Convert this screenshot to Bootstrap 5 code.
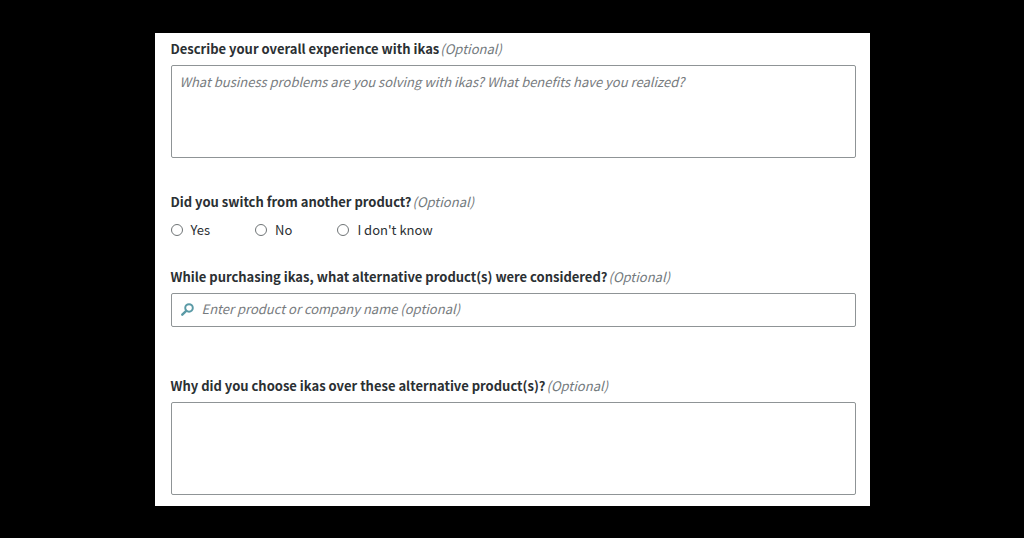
<!DOCTYPE html>
<html lang="en">
<head>
<meta charset="utf-8">
<meta name="viewport" content="width=device-width, initial-scale=1">
<title>ikas review form</title>
<link href="https://cdn.jsdelivr.net/npm/bootstrap@5.3.0/dist/css/bootstrap.min.css" rel="stylesheet">
<style>
  body { background: #000; color: #2b3033; font: 13px/20px "Noto Sans CJK SC", "Open Sans", sans-serif; }
  .review-form { max-width: 715px; padding: 6px 14px 11px 16px; }
  .question { display: flex; flex-wrap: wrap; column-gap: 1px; font-weight: 700; line-height: 20px; margin-bottom: 6px; padding: 0; font-size: 13px; }
  .question i { font-weight: 400; color: #72797d; }
  .form-control { border: 1px solid #8f9496; border-radius: 2px; font-size: 13px; line-height: 20px; padding: 6px 8px; color: #2b3033; }
  .form-control::placeholder { color: #777b7e; font-style: italic; }
  textarea.form-control { height: 93px; resize: none; }
  .search-box .form-control { height: 34px; padding: 5px 8px 7px 30px; }
  .search-box svg { left: 10px; top: 10px; }
  .choices { column-gap: 45px; }
  .choices label { gap: 8px; }
  .choices .form-check-input { width: 12px; height: 12px; margin: 0; border: 1px solid #6f7476; }
  .block-a { margin-bottom: 34px; }
  .block-b { margin-bottom: 27px; }
  .block-c { margin-bottom: 49px; }
</style>
</head>
<body>
<main class="container-fluid d-flex justify-content-center align-items-center min-vh-100">
  <form class="review-form bg-white w-100">
    <div class="block-a">
      <label class="question" for="experience">Describe your overall experience with ikas <i>(Optional)</i></label>
      <textarea class="form-control" id="experience" placeholder="What business problems are you solving with ikas? What benefits have you realized?"></textarea>
    </div>
    <fieldset class="block-b">
      <legend class="question float-none mb-2">Did you switch from another product? <i>(Optional)</i></legend>
      <div class="choices d-flex flex-wrap">
        <label class="d-flex align-items-center"><input class="form-check-input" type="radio" name="switched">Yes</label>
        <label class="d-flex align-items-center"><input class="form-check-input" type="radio" name="switched">No</label>
        <label class="d-flex align-items-center"><input class="form-check-input" type="radio" name="switched">I don't know</label>
      </div>
    </fieldset>
    <div class="block-c">
      <label class="question" for="alternatives">While purchasing ikas, what alternative product(s) were considered? <i>(Optional)</i></label>
      <div class="search-box position-relative">
        <svg class="position-absolute" width="13" height="13" viewBox="0 0 12 12" fill="none" stroke="#5a9aa6" aria-hidden="true"><circle cx="7.4" cy="4.6" r="3.5" stroke-width="1.8"/><path d="M4.8 7.2 1.2 10.8" stroke-width="2.2" stroke-linecap="round"/></svg>
        <input class="form-control" type="text" id="alternatives" placeholder="Enter product or company name (optional)">
      </div>
    </div>
    <div>
      <label class="question" for="reason">Why did you choose ikas over these alternative product(s)? <i>(Optional)</i></label>
      <textarea class="form-control" id="reason"></textarea>
    </div>
  </form>
</main>
<script src="https://cdn.jsdelivr.net/npm/bootstrap@5.3.0/dist/js/bootstrap.bundle.min.js"></script>
</body>
</html>
